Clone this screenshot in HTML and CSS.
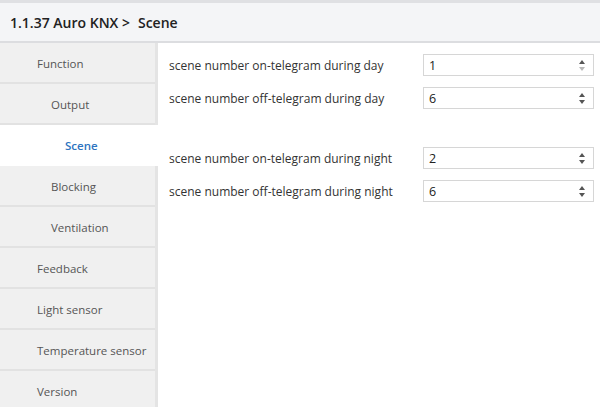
FILE: index.html
```html
<!DOCTYPE html>
<html>
<head>
<meta charset="utf-8">
<link rel="stylesheet" href="styles.css">
</head>
<body>
<header class="header">
  <span class="crumb">1.1.37 Auro KNX &gt;</span>
  <span class="crumb-current">Scene</span>
</header>
<div class="main">
  <nav class="sidebar">
    <div class="nav-item level1">Function</div>
    <div class="nav-item level2">Output</div>
    <div class="nav-item level2 selected">Scene</div>
    <div class="nav-item level2">Blocking</div>
    <div class="nav-item level2">Ventilation</div>
    <div class="nav-item level1">Feedback</div>
    <div class="nav-item level1">Light sensor</div>
    <div class="nav-item level1">Temperature sensor</div>
    <div class="nav-item level1">Version</div>
  </nav>
  <section class="content">
    <div class="group">
      <div class="row">
        <label class="label">scene number on-telegram during day</label>
        <div class="spin"><span class="value">1</span><span class="arrows"><span class="up"></span><span class="down disabled"></span></span></div>
      </div>
      <div class="row">
        <label class="label">scene number off-telegram during day</label>
        <div class="spin"><span class="value">6</span><span class="arrows"><span class="up"></span><span class="down"></span></span></div>
      </div>
    </div>
    <div class="group">
      <div class="row">
        <label class="label">scene number on-telegram during night</label>
        <div class="spin"><span class="value">2</span><span class="arrows"><span class="up"></span><span class="down"></span></span></div>
      </div>
      <div class="row">
        <label class="label">scene number off-telegram during night</label>
        <div class="spin"><span class="value">6</span><span class="arrows"><span class="up"></span><span class="down"></span></span></div>
      </div>
    </div>
  </section>
</div>
</body>
</html>
```
FILE: styles.css
```css
html, body {
  margin: 0;
  padding: 0;
  background: #ffffff;
  font-family: "Open Sans", "Noto Sans", "Liberation Sans", sans-serif;
  color: #333333;
  height: 100%;
  overflow: hidden;
}
.header {
  box-sizing: border-box;
  height: 43px;
  border-top: 3px solid #dfe0e3;
  border-bottom: 2px solid #dcdde0;
  background: #f4f5f7;
  display: flex;
  align-items: center;
  padding-left: 10px;
  font-weight: 600;
  font-size: 14px;
  color: #222222;
  gap: 8px;
}
.main {
  display: flex;
  height: 364px;
}
.sidebar {
  width: 155px;
  flex: none;
  background: #f0f0f0;
  border-right: 3px solid #e4e4e4;
  display: flex;
  flex-direction: column;
}
.nav-item {
  box-sizing: border-box;
  height: 41px;
  flex: none;
  display: flex;
  align-items: center;
  font-size: 11.5px;
  color: #555555;
  border-bottom: 2px solid #e2e2e2;
  padding-top: 2px;
  white-space: nowrap;
}
.level1 { padding-left: 37px; }
.level2 { padding-left: 51px; }
.nav-item.selected {
  background: #ffffff;
  color: #2e74c0;
  font-weight: 600;
  padding-left: 65px;
  margin-right: -3px;
  border-bottom-color: #ffffff;
}
.content {
  flex: 1;
  padding: 11px 6px 0 11px;
  display: flex;
  flex-direction: column;
  gap: 38px;
}
.group {
  display: flex;
  flex-direction: column;
  gap: 11px;
}
.row {
  display: grid;
  grid-template-columns: 254px 171px;
  align-items: center;
  height: 22px;
}
.label {
  font-size: 12px;
  color: #333333;
  white-space: nowrap;
}
.spin {
  box-sizing: border-box;
  height: 22px;
  border: 1px solid #d6d6d6;
  display: flex;
  align-items: center;
  justify-content: space-between;
  padding: 0 8px 0 5px;
  font-size: 12.5px;
  color: #222222;
}
.arrows {
  display: flex;
  flex-direction: column;
  gap: 3px;
}
.up, .down {
  width: 0;
  height: 0;
  border-left: 3px solid transparent;
  border-right: 3px solid transparent;
}
.up { border-bottom: 4px solid #555555; }
.down { border-top: 4px solid #555555; }
.down.disabled { border-top-color: #b8b8b8; }
```
